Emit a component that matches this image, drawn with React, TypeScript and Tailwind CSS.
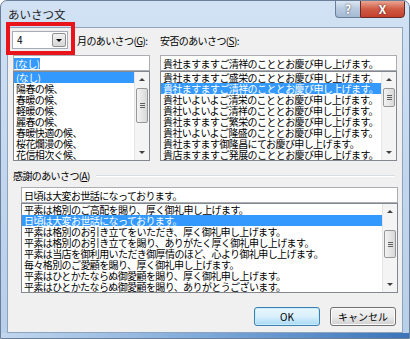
import React from 'react';

interface ScrollBarProps {
    offset: string;
    thumb: string;
}

const ScrollBar: React.FC<ScrollBarProps> = ({ offset, thumb }) => {
    return (
        <div className="flex flex-col w-[15px] h-full bg-[#f4f4f4] border-l border-[#e6e6e6]">
            <div className="h-[15px] flex items-center justify-center">
                <div className="w-0 h-0 border-l-[3px] border-r-[3px] border-b-[3px] border-l-transparent border-r-transparent border-b-[#404040]" />
            </div>
            <div className="flex-1 flex flex-col">
                <div className={offset} />
                <div className={`${thumb} mx-[1px] rounded-[2px] border border-[#979797] bg-gradient-to-r from-[#f3f3f3] to-[#d8d8d8] flex flex-col items-center justify-center gap-[1px]`}>
                    <div className="w-[5px] h-px bg-[#606060]" />
                    <div className="w-[5px] h-px bg-[#606060]" />
                    <div className="w-[5px] h-px bg-[#606060]" />
                </div>
            </div>
            <div className="h-[15px] flex items-center justify-center">
                <div className="w-0 h-0 border-l-[3px] border-r-[3px] border-t-[3px] border-l-transparent border-r-transparent border-t-[#404040]" />
            </div>
        </div>
    );
};

interface ListBoxProps {
    items: string[];
    selected: number;
    offset: string;
    thumb: string;
    className: string;
}

const ListBox: React.FC<ListBoxProps> = ({ items, selected, offset, thumb, className }) => {
    return (
        <div className={`${className} h-[90px] border border-[#828790] bg-white flex`}>
            <div className="flex-1 flex flex-col overflow-hidden">
                {items.map((item, i) => (
                    <div
                        key={i}
                        className={`h-[11px] leading-[11px] pl-[2px] whitespace-nowrap ${i === selected ? 'bg-[#3399ff] text-white' : 'text-black'}`}
                    >
                        {item}
                    </div>
                ))}
            </div>
            <ScrollBar offset={offset} thumb={thumb} />
        </div>
    );
};

const seasonItems = ['(なし)', '陽春の候、', '春暖の候、', '軽暖の候、', '麗春の候、', '春暖快適の候、', '桜花爛漫の候、', '花信相次ぐ候、'];

const healthItems = [
    '貴社ますますご盛栄のこととお慶び申し上げます。',
    '貴社ますますご清祥のこととお慶び申し上げます。',
    '貴社いよいよご清栄のこととお慶び申し上げます。',
    '貴社いよいよご清祥のこととお慶び申し上げます。',
    '貴社ますますご繁栄のこととお慶び申し上げます。',
    '貴社いよいよご隆盛のこととお慶び申し上げます。',
    '貴社ますます御隆昌にてお慶び申し上げます。',
    '貴店ますますご発展のこととお慶び申し上げます。',
];

const thanksItems = [
    '平素は格別のご高配を賜り、厚く御礼申し上げます。',
    '日頃は大変お世話になっております。',
    '平素は格別のお引き立てをいただき、厚く御礼申し上げます。',
    '平素は格別のお引き立てを賜り、ありがたく厚く御礼申し上げます。',
    '平素は当店を御利用いただき御厚情のほど、心より御礼申し上げます。',
    '毎々格別のご愛顧を賜り、厚く御礼申し上げます。',
    '平素はひとかたならぬ御愛顧を賜り、厚く御礼申し上げます。',
    '平素はひとかたならぬ御愛顧を賜り、ありがとうございます。',
];

const App: React.FC = () => {
    return (
        <div className="w-[410px] h-[339px] relative font-['Noto_Sans_CJK_JP',sans-serif] text-[10px] tracking-[-0.6px] text-black">
            <div className="w-full h-full flex flex-col rounded-t-[7px] border border-[#6b7f99] bg-gradient-to-b from-[#d2e2f4] via-[#c2d7ee] to-[#b8cfe9] overflow-hidden">
                {/* title bar */}
                <div className="h-[26px] flex items-start justify-between">
                    <div className="pl-[7px] pt-[6px] text-[11.5px] leading-[14px] tracking-normal text-[#1e1e1e]">あいさつ文</div>
                    <div className="flex mr-[4px] -mt-px">
                        <div className="w-[25px] h-[18px] rounded-bl-[4px] border border-[#6b7f99] border-r-0 bg-gradient-to-b from-[#dbe6f3] via-[#b7c9de] to-[#a3bad3] flex items-center justify-center text-white font-bold text-[12px] tracking-normal [text-shadow:0_0_2px_#334]">?</div>
                        <div className="w-[45px] h-[18px] rounded-br-[4px] border border-[#6a2a25] bg-gradient-to-b from-[#e8a592] via-[#cf5a45] to-[#c2402e] flex items-center justify-center text-white font-bold text-[12px] tracking-normal [text-shadow:0_0_2px_#511]">X</div>
                    </div>
                </div>
                {/* client area */}
                <div className="flex-1 mx-[6px] border border-[#8ea3bd] bg-[#f0f0f0] flex flex-col">
                    <div className="mt-[3px] h-[18px] flex items-center">
                        <div className="ml-[4px] w-[56px] h-[18px] border border-[#a5acb5] bg-white flex items-center">
                            <div className="flex-1 pl-[4px] leading-[12px]">4</div>
                            <div className="w-[14px] h-[14px] mr-px rounded-[2px] border border-[#8e8f8f] bg-gradient-to-b from-[#f2f2f2] to-[#d6d6d6] flex items-center justify-center">
                                <div className="w-0 h-0 border-l-[3px] border-r-[3px] border-t-[3px] border-l-transparent border-r-transparent border-t-black" />
                            </div>
                        </div>
                        <div className="ml-[9px] w-[83px]">月のあいさつ(<span className="underline">G</span>):</div>
                        <div>安否のあいさつ(<span className="underline">S</span>):</div>
                    </div>
                    <div className="mt-[6px] flex">
                        <div className="ml-[5px] w-[137px] flex flex-col">
                            <div className="h-[16px] border border-[#abadb3] bg-white flex items-center">
                                <span className="bg-[#3399ff] text-white leading-[11px] pl-px pr-px">(なし)</span>
                            </div>
                            <ListBox items={seasonItems} selected={0} offset="h-px" thumb="h-[35px]" className="w-[137px]" />
                        </div>
                        <div className="ml-[10px] w-[237px] flex flex-col">
                            <div className="h-[16px] border border-[#abadb3] bg-white flex items-center pl-[2px] whitespace-nowrap">
                                貴社ますますご清祥のこととお慶び申し上げます。
                            </div>
                            <ListBox items={healthItems} selected={1} offset="h-px" thumb="h-[19px]" className="w-[237px]" />
                        </div>
                    </div>
                    <div className="mt-[9px] h-[12px] ml-[5px] mr-[7px] flex items-center">
                        <div className="leading-[12px]">感謝のあいさつ(<span className="underline">A</span>)</div>
                        <div className="flex-1 ml-[6px] h-[2px] border-t border-[#d5dfe5] border-b border-b-white" />
                    </div>
                    <div className="mt-[5px] ml-[13px] w-[377px] flex flex-col">
                        <div className="h-[16px] border border-[#abadb3] bg-white flex items-center pl-[2px]">
                            日頃は大変お世話になっております。
                        </div>
                        <ListBox items={thanksItems} selected={1} offset="h-[11px]" thumb="h-[28px]" className="w-[377px]" />
                    </div>
                    <div className="mt-[14px] flex justify-end gap-[10px] pr-[6px] tracking-normal">
                        <div className="w-[66px] h-[19px] rounded-[3px] border border-[#3c7fb1] bg-gradient-to-b from-[#eaf6fd] via-[#d9f0fc] to-[#a7d9f5] flex items-center justify-center shadow-[inset_0_0_0_1px_#c9ecfc]">OK</div>
                        <div className="w-[66px] h-[19px] rounded-[3px] border border-[#707070] bg-gradient-to-b from-[#f2f2f2] via-[#ebebeb] to-[#cfcfcf] flex items-center justify-center shadow-[inset_0_0_0_1px_#fcfcfc]">キャンセル</div>
                    </div>
                </div>
                <div className="h-[5px] bg-gradient-to-r from-[#c2d7ee] via-[#7ea9d9] to-[#3b74b8]" />
            </div>
            {/* annotation box */}
            <div className="absolute left-[6px] top-[22px] w-[69px] h-[33px] border-[4px] border-[#e8131b]" />
        </div>
    );
};

export default App;
